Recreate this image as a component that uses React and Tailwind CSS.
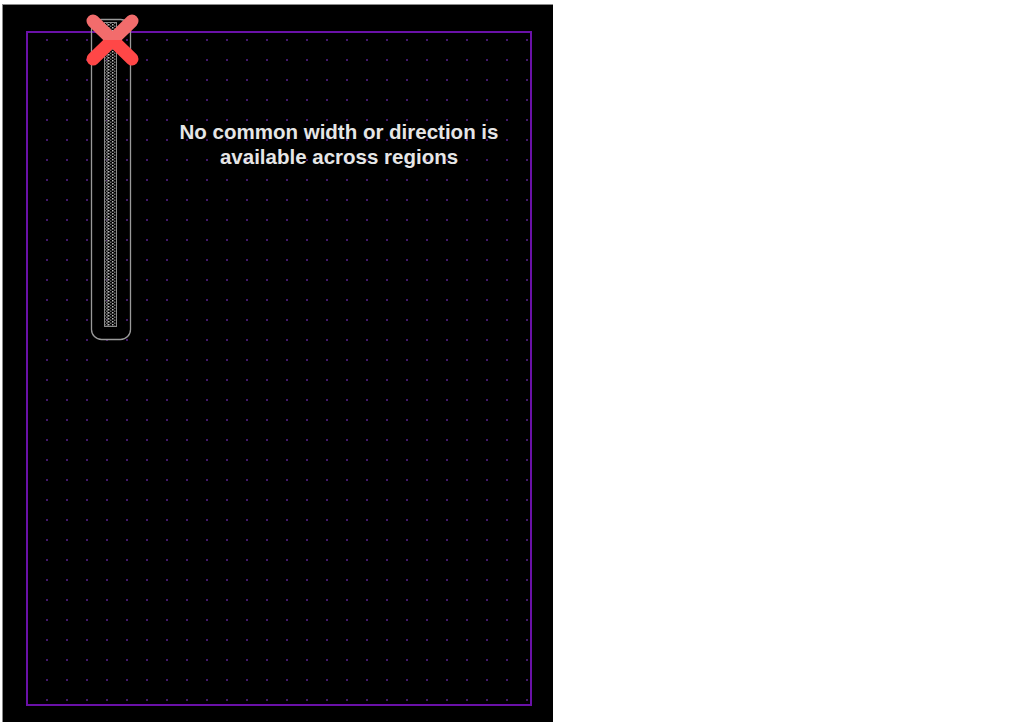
import React from "react";

const Canvas = () => {
  return (
    <svg
      className="absolute inset-0"
      width="551"
      height="718"
      viewBox="2 4 551 718"
    >
      <defs>
        <pattern id="dots" x="37" y="30" width="20" height="20" patternUnits="userSpaceOnUse">
          <rect x="9" y="9" width="2" height="2" fill="#44166e" />
        </pattern>
        <pattern id="hatch" x="0" y="0" width="4" height="3" patternUnits="userSpaceOnUse">
          <rect x="0" y="0" width="1.5" height="1.5" fill="#bdbdbd" />
          <rect x="2" y="1.5" width="1.5" height="1.5" fill="#6f6f6f" />
        </pattern>
        <clipPath id="top-half">
          <rect x="80" y="0" width="70" height="40" />
        </clipPath>
        <clipPath id="bottom-half">
          <rect x="80" y="40" width="70" height="40" />
        </clipPath>
      </defs>

      {/* frame edges */}
      <line x1="2" y1="4.5" x2="553" y2="4.5" stroke="#8a8a8a" strokeWidth="1" />
      <line x1="2.5" y1="4" x2="2.5" y2="722" stroke="#8a8a8a" strokeWidth="1" />

      {/* board outline + grid */}
      <rect x="27" y="32" width="504" height="673" fill="url(#dots)" />
      <rect x="27" y="32" width="504" height="673" fill="none" stroke="#6a11a8" strokeWidth="2" />

      {/* trace */}
      <rect x="91.5" y="19.5" width="39" height="320" rx="10" fill="none" stroke="#9a9a9a" strokeWidth="1.3" />
      <rect x="104.5" y="22.5" width="12" height="304" fill="url(#hatch)" stroke="#8a8a8a" strokeWidth="1" />
      <line x1="107.5" y1="23" x2="107.5" y2="326" stroke="#5a5a5a" strokeWidth="1" />

      {/* error marker */}
      <g strokeWidth="13" strokeLinecap="round">
        <g clipPath="url(#top-half)" stroke="#f26c6c">
          <line x1="93" y1="21" x2="132" y2="59" />
          <line x1="132" y1="21" x2="93" y2="59" />
        </g>
        <g clipPath="url(#bottom-half)" stroke="#ff4747">
          <line x1="93" y1="21" x2="132" y2="59" />
          <line x1="132" y1="21" x2="93" y2="59" />
        </g>
      </g>
    </svg>
  );
};

const App = () => {
  return (
    <div className="w-[1013px] h-[728px] bg-white pt-[4px] pl-[2px]">
      <div className="relative w-[551px] h-[718px] bg-black">
        <Canvas />
        <div
          className="absolute left-[137px] top-[115px] w-[400px] text-center text-[20.5px] leading-[25px] font-bold text-[#e6e6e6]"
          style={{ fontFamily: '"Liberation Sans", Arial, sans-serif' }}
        >
          No common width or direction is
          <br />
          available across regions
        </div>
      </div>
    </div>
  );
};

export default App;
